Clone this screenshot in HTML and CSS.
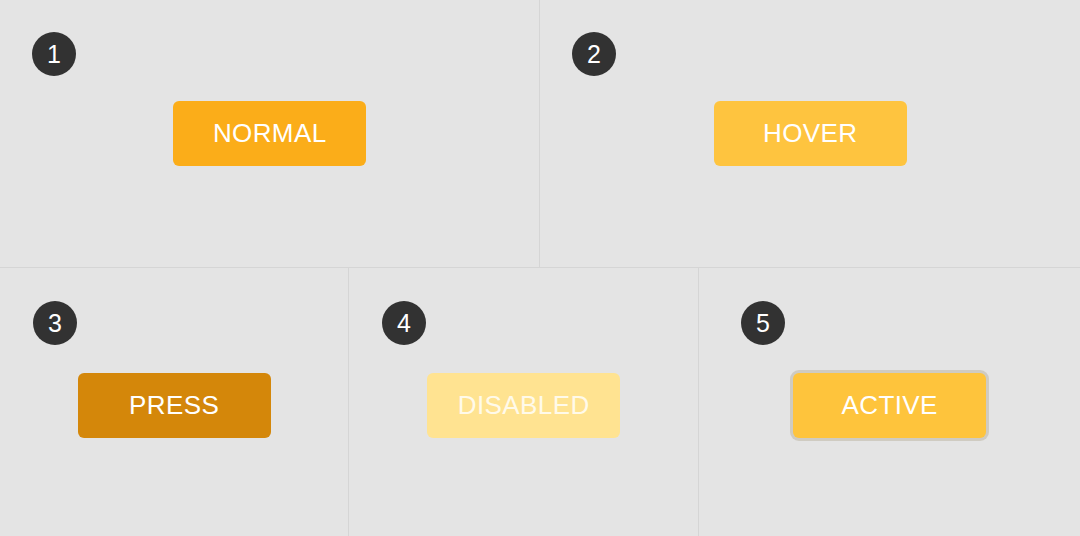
FILE: index.html
```html
<!DOCTYPE html>
<html>
<head>
<meta charset="utf-8">
<link rel="stylesheet" href="styles.css">
</head>
<body>
<div class="board">
  <div class="row row-top">
    <div class="cell cell-a">
      <span class="badge">1</span>
      <button class="btn btn-normal">NORMAL</button>
    </div>
    <div class="cell cell-b">
      <span class="badge">2</span>
      <button class="btn btn-hover">HOVER</button>
    </div>
  </div>
  <div class="row row-bottom">
    <div class="cell cell-c">
      <span class="badge">3</span>
      <button class="btn btn-press">PRESS</button>
    </div>
    <div class="cell cell-d">
      <span class="badge">4</span>
      <button class="btn btn-disabled">DISABLED</button>
    </div>
    <div class="cell cell-e">
      <span class="badge badge-wide">5</span>
      <button class="btn btn-active">ACTIVE</button>
    </div>
  </div>
</div>
</body>
</html>
```
FILE: styles.css
```css
html, body {
  margin: 0;
  padding: 0;
  background: #e4e4e4;
  overflow: hidden;
}
.board {
  width: 1080px;
  display: flex;
  flex-direction: column;
  font-family: "Liberation Sans", Arial, sans-serif;
}
.row {
  display: flex;
}
.row-top {
  height: 267px;
  border-bottom: 1px solid #d5d5d5;
}
.row-bottom {
  height: 275px;
}
.cell {
  position: relative;
  display: flex;
  align-items: center;
  justify-content: center;
}
.cell-a { width: 539px; border-right: 1px solid #d5d5d5; }
.cell-b { flex: 1; }
.cell-c { width: 348px; border-right: 1px solid #d5d5d5; }
.cell-d { width: 349px; border-right: 1px solid #d5d5d5; }
.cell-e { flex: 1; }
.badge {
  position: absolute;
  top: 32px;
  left: 32px;
  width: 44px;
  height: 44px;
  border-radius: 50%;
  background: #323232;
  color: #fff;
  font-size: 25px;
  line-height: 45px;
  text-align: center;
}
.row-bottom .badge {
  top: 33px;
  left: 33px;
}
.row-bottom .badge-wide {
  left: 42px;
}
.btn {
  width: 193px;
  height: 65px;
  border: none;
  border-radius: 6px;
  color: #fff;
  font-family: "Liberation Sans", Arial, sans-serif;
  font-size: 26px;
  letter-spacing: 0.4px;
  padding: 0;
  text-indent: 0.4px;
}
.btn-normal { background: #fbad19; }
.btn-hover { background: #fec43f; }
.btn-press { background: #d4870a; }
.btn-disabled { background: #ffe391; color: #fffaea; }
.btn-active {
  background: #fec43c;
  box-shadow: 0 0 0 3px #cfcbc1;
}
```
